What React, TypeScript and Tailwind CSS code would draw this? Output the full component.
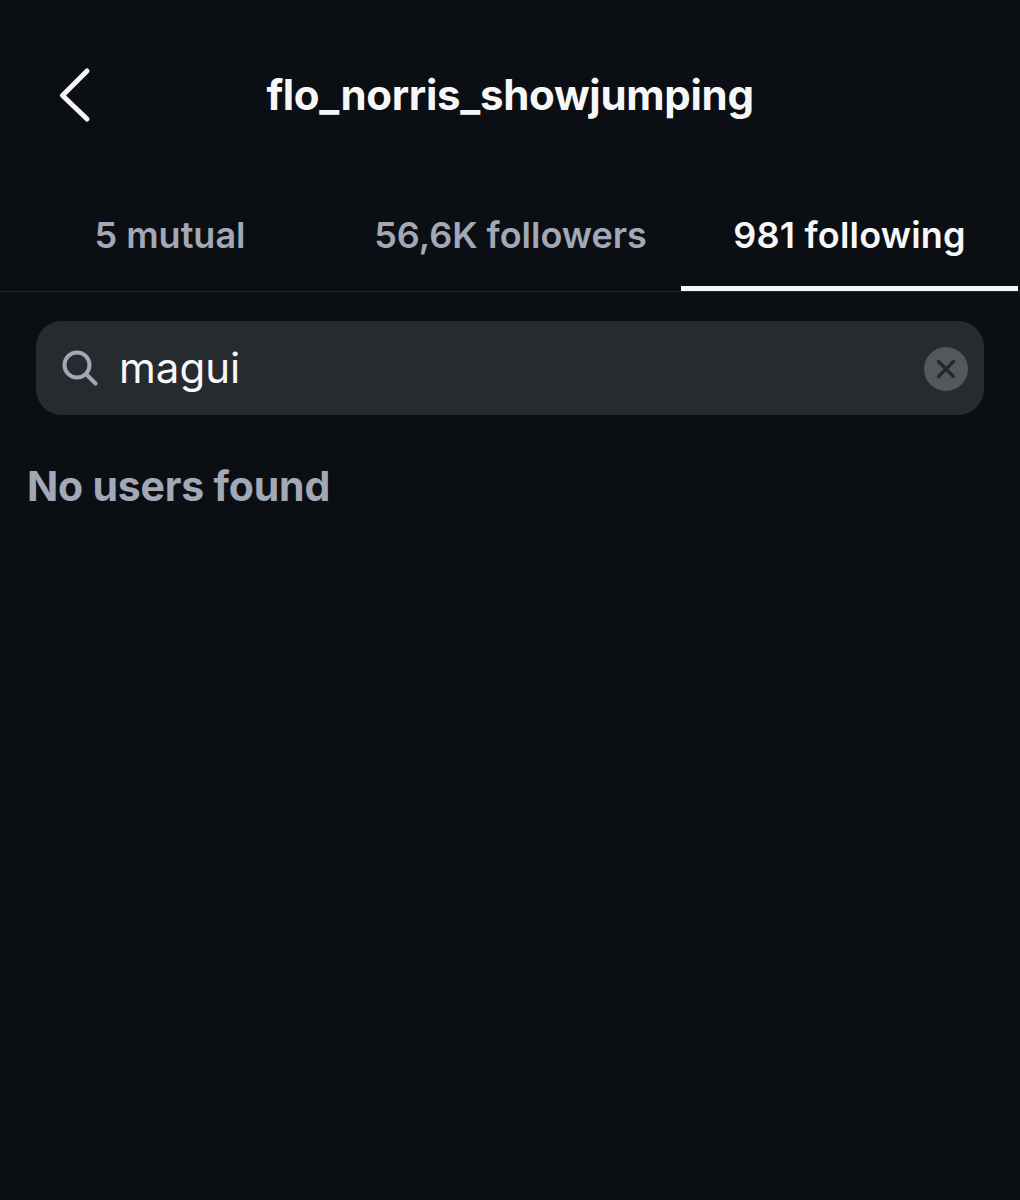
import React from "react";

export default function App() {
  return (
    <div className="w-[1020px] h-[1200px] bg-[#0b0f14] text-white overflow-hidden flex flex-col" style={{ fontFamily: 'Inter, "Liberation Sans", sans-serif' }}>
      <div className="h-[191px] shrink-0 flex items-start relative">
        <div className="w-full pt-[69px] text-center text-[42px] leading-[52px] font-bold tracking-[-0.3px] text-[#f7f7f8]">flo_norris_showjumping</div>
        <svg className="absolute left-[56px] top-[66px]" width="38" height="60" viewBox="0 0 38 60" fill="none" stroke="#f7f7f8" strokeWidth="5" strokeLinecap="round" strokeLinejoin="round">
          <path d="M31 5 L6.5 29.5 L31 53" />
        </svg>
      </div>
      <div className="h-[101px] shrink-0 flex border-b border-[#23282c]">
        <div className="w-[340px] pt-[21px] text-center text-[36px] leading-[46px] font-semibold text-[#a3a8b6]">5 mutual</div>
        <div className="w-[341px] pt-[21px] text-center text-[36px] leading-[46px] font-semibold text-[#a3a8b6]">56,6K followers</div>
        <div className="w-[337px] pt-[21px] text-center text-[36px] leading-[46px] font-semibold tracking-[0.2px] text-[#f7f7f8] border-b-[5px] border-[#f7f7f8] h-[100px]">981 following</div>
      </div>
      <div className="mt-[29px] mx-[36px] h-[94px] rounded-[26px] bg-[#262b30] flex items-center pl-[26px] pr-[16px]">
        <svg width="36" height="36" viewBox="0 0 36 36" fill="none" stroke="#a3a8b6" strokeWidth="4" strokeLinecap="round">
          <circle cx="15" cy="15" r="12.5" />
          <path d="M25 25 L33.5 33.5" />
        </svg>
        <div className="ml-[21px] text-[42px] leading-[52px] text-[#f7f7f8] flex-1">magui</div>
        <div className="w-[44px] h-[44px] mt-[2px] rounded-full bg-[#54585d] flex items-center justify-center">
          <svg width="20" height="20" viewBox="0 0 20 20" fill="none" stroke="#24282c" strokeWidth="3.4" strokeLinecap="round">
            <path d="M2.5 2.5 L17.5 17.5 M17.5 2.5 L2.5 17.5" />
          </svg>
        </div>
      </div>
      <div className="mt-[45px] pl-[27px] text-[41px] leading-[52px] font-bold tracking-[-0.2px] text-[#a3a8b6]">No users found</div>
    </div>
  );
}
